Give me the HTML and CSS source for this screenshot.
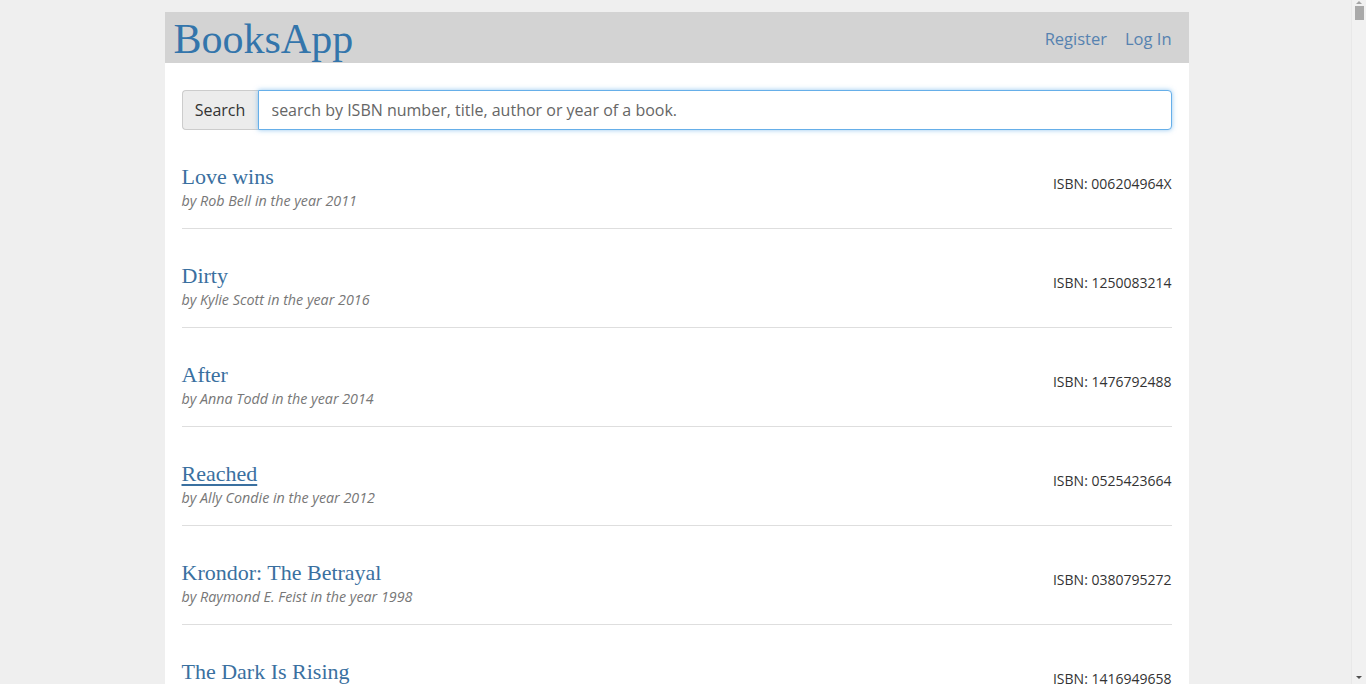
FILE: index.html
```html
<!DOCTYPE html>
<html>
<head>
<meta charset="utf-8">
<title>BooksApp</title>
<link rel="stylesheet" href="styles.css">
</head>
<body>
<div class="page">
  <header class="topbar">
    <a class="brand" href="#">BooksApp</a>
    <nav class="nav">
      <a href="#">Register</a>
      <a href="#">Log In</a>
    </nav>
  </header>
  <main class="content">
    <div class="search">
      <button class="search-btn">Search</button>
      <input class="search-input" type="text" placeholder="search by ISBN number, title, author or year of a book.">
    </div>
    <ul class="books">
      <li class="book">
        <div class="info"><a class="title" href="#">Love wins</a><div class="meta">by Rob Bell in the year 2011</div></div>
        <div class="isbn">ISBN: 006204964X</div>
      </li>
      <li class="book">
        <div class="info"><a class="title" href="#">Dirty</a><div class="meta">by Kylie Scott in the year 2016</div></div>
        <div class="isbn">ISBN: 1250083214</div>
      </li>
      <li class="book">
        <div class="info"><a class="title" href="#">After</a><div class="meta">by Anna Todd in the year 2014</div></div>
        <div class="isbn">ISBN: 1476792488</div>
      </li>
      <li class="book">
        <div class="info"><a class="title hover" href="#">Reached</a><div class="meta">by Ally Condie in the year 2012</div></div>
        <div class="isbn">ISBN: 0525423664</div>
      </li>
      <li class="book">
        <div class="info"><a class="title" href="#">Krondor: The Betrayal</a><div class="meta">by Raymond E. Feist in the year 1998</div></div>
        <div class="isbn">ISBN: 0380795272</div>
      </li>
      <li class="book">
        <div class="info"><a class="title" href="#">The Dark Is Rising</a><div class="meta">by Susan Cooper in the year 1973</div></div>
        <div class="isbn">ISBN: 1416949658</div>
      </li>
    </ul>
  </main>
</div>
<div class="scrollbar">
  <span class="arrow up"></span>
  <span class="thumb"></span>
  <span class="arrow down"></span>
</div>
</body>
</html>
```

FILE: styles.css
```css
html, body {
  margin: 0;
  padding: 0;
}
body {
  background: #efefef;
  font-family: "Open Sans", "Noto Sans", sans-serif;
  color: #333;
  padding-right: 13px;
}
.page {
  width: 1024px;
  margin: 12px auto 0;
}
.topbar {
  background: #d3d3d3;
  height: 51px;
  display: flex;
  align-items: center;
  justify-content: space-between;
  padding: 0 17px 0 9px;
}
.brand {
  font-family: "Liberation Serif", "Times New Roman", serif;
  font-size: 42px;
  color: #3375ab;
  text-decoration: none;
  line-height: 1;
  margin-top: 2px;
}
.nav {
  display: flex;
  gap: 18px;
  margin-top: 1px;
}
.nav a {
  font-size: 16.5px;
  color: #5682b0;
  text-decoration: none;
}
.content {
  background: #fff;
  padding: 27px 17px 0;
}
.search {
  display: flex;
  height: 40px;
}
.search-btn {
  box-sizing: border-box;
  height: 40px;
  width: 76px;
  background: #ececec;
  border: 1px solid #ccc;
  border-right: none;
  border-radius: 4px 0 0 4px;
  font-family: "Open Sans", "Noto Sans", sans-serif;
  font-size: 16px;
  color: #333;
  padding: 0;
}
.search-input {
  flex: 1;
  box-sizing: border-box;
  height: 40px;
  border: 1px solid #66afe9;
  border-radius: 0 4px 4px 0;
  box-shadow: 0 0 5px rgba(102, 175, 233, 0.7);
  padding: 0 13px;
  font-family: "Open Sans", "Noto Sans", sans-serif;
  font-size: 16px;
  outline: none;
}
.search-input::placeholder {
  color: #666;
}
.books {
  list-style: none;
  margin: 0;
  padding: 0;
}
.book {
  display: flex;
  justify-content: space-between;
  align-items: flex-start;
  padding: 35px 0 17px;
  border-bottom: 1px solid #dedede;
}
.info {
  display: flex;
  flex-direction: column;
  gap: 2px;
}
.title {
  font-family: "Liberation Serif", "Times New Roman", serif;
  font-size: 22px;
  line-height: 24px;
  color: #3a70a0;
  text-decoration: none;
}
.title.hover {
  text-decoration: underline;
  text-underline-offset: 3px;
}
.meta {
  font-size: 14.3px;
  line-height: 20px;
  font-style: italic;
  color: #777;
}
.isbn {
  font-size: 14px;
  line-height: 20px;
  margin-top: 9px;
  color: #333;
}
.scrollbar {
  position: fixed;
  top: 0;
  right: 0;
  bottom: 0;
  width: 15px;
  background: #f1f1f1;
  border-left: 1px solid #e8e8e8;
  box-sizing: border-box;
  display: flex;
  flex-direction: column;
  align-items: center;
  padding: 1px 0;
}
.thumb {
  width: 9px;
  height: 14px;
  background: #a9a9a9;
  margin-top: 2px;
}
.arrow {
  width: 0;
  height: 0;
  border-left: 3px solid transparent;
  border-right: 3px solid transparent;
}
.arrow.up {
  border-bottom: 3px solid #a3a3a3;
}
.arrow.down {
  border-top: 3px solid #505050;
  margin-top: auto;
  margin-bottom: 4px;
}
```
